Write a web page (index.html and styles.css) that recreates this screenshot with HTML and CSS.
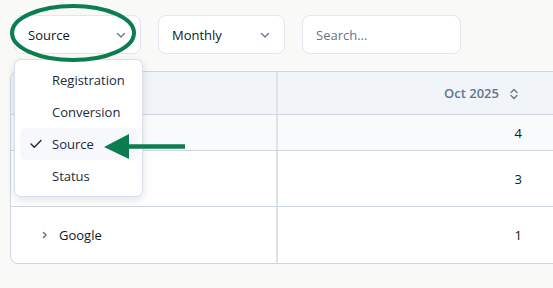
FILE: index.html
```html
<!DOCTYPE html>
<html lang="en">
<head>
    <meta charset="UTF-8">
    <meta name="viewport" content="width=device-width, initial-scale=1.0">
    <title>Leads report</title>
    <link rel="stylesheet" href="styles.css">
</head>
<body>
    <div class="toolbar">
        <div class="select-wrap">
            <button class="select select-group">
                <span>Source</span>
                <svg class="chev" width="12" height="12" viewBox="0 0 12 12"><path d="M2.5 4.5 6 8l3.5-3.5" fill="none" stroke="#64748b" stroke-width="1.3" stroke-linecap="round" stroke-linejoin="round"/></svg>
            </button>
            <ul class="menu">
                <li class="menu-item">Registration</li>
                <li class="menu-item">Conversion</li>
                <li class="menu-item active">
                    <svg class="check" width="12" height="10" viewBox="0 0 12 10"><path d="M1 5l3.3 3.3L11 1.5" fill="none" stroke="#1e293b" stroke-width="1.4" stroke-linecap="round" stroke-linejoin="round"/></svg>
                    Source
                </li>
                <li class="menu-item">Status</li>
            </ul>
        </div>
        <button class="select select-period">
            <span>Monthly</span>
            <svg class="chev" width="12" height="12" viewBox="0 0 12 12"><path d="M2.5 4.5 6 8l3.5-3.5" fill="none" stroke="#64748b" stroke-width="1.3" stroke-linecap="round" stroke-linejoin="round"/></svg>
        </button>
        <input class="search" type="text" placeholder="Search...">
    </div>

    <div class="table">
        <div class="row head">
            <div class="cell first"></div>
            <div class="cell num">
                Oct 2025
                <svg class="sort" width="12" height="14" viewBox="0 0 12 14"><path d="M3 5.5 6 2.5l3 3M3 8.5l3 3 3-3" fill="none" stroke="#64748b" stroke-width="1.3" stroke-linecap="round" stroke-linejoin="round"/></svg>
            </div>
        </div>
        <div class="row short alt">
            <div class="cell first"></div>
            <div class="cell num">4</div>
        </div>
        <div class="row tall">
            <div class="cell first"></div>
            <div class="cell num">3</div>
        </div>
        <div class="row tall last">
            <div class="cell first">
                <svg class="expand" width="8" height="10" viewBox="0 0 8 10"><path d="M2.5 2.5 5 5 2.5 7.5" fill="none" stroke="#64748b" stroke-width="1.6" stroke-linecap="round" stroke-linejoin="round"/></svg>
                Google
            </div>
            <div class="cell num">1</div>
        </div>
    </div>

    <!-- annotation marks drawn over the screenshot -->
    <svg class="marks" width="553" height="288" viewBox="0 0 553 288">
        <ellipse cx="73" cy="33" rx="61" ry="27" fill="none" stroke="#0b7d4f" stroke-width="4"/>
        <path d="M128 146.5H185" stroke="#0b7d4f" stroke-width="4.5"/>
        <path d="M104 147L129 134V159Z" fill="#0b7d4f"/>
    </svg>
</body>
</html>
```

FILE: styles.css
```css
/* Report toolbar + pivot table */
body {
    margin: 0;
    background-color: #f9f9f7;
    font-family: "Open Sans", "Noto Sans", sans-serif;
    font-size: 13px;
    color: #0f172a;
    overflow: hidden;
    position: relative;
    height: 288px;
}

.toolbar {
    display: flex;
    gap: 17px;
    padding: 15px 0 0 14px;
    height: 39px;
}
.select-wrap {
    position: relative;
}
.select {
    display: flex;
    align-items: center;
    justify-content: space-between;
    height: 39px;
    padding: 0 13px 0 13px;
    background-color: #fff;
    border: 1px solid #e2e6ee;
    border-radius: 8px;
    font: inherit;
    color: #0f172a;
    box-sizing: border-box;
}
.select-group { width: 127px; }
.select-period { width: 127px; }
.chev { margin-top: 1px; }

.search {
    width: 159px;
    height: 39px;
    box-sizing: border-box;
    padding: 0 13px;
    border: 1px solid #e2e6ee;
    border-radius: 8px;
    background-color: #fff;
    font: inherit;
    outline: none;
}
.search::placeholder { color: #64748b; }

.menu {
    position: absolute;
    top: 44px;
    left: 0;
    z-index: 5;
    width: 129px;
    margin: 0;
    padding: 4px 4px 4px 5px;
    list-style: none;
    box-sizing: border-box;
    background-color: #fff;
    border: 1px solid #d9dfe8;
    border-radius: 7px;
    box-shadow: 0 3px 8px rgba(15, 23, 42, 0.12);
}
.menu-item {
    position: relative;
    height: 32px;
    line-height: 32px;
    padding-left: 32px;
    border-radius: 6px;
    color: #1e293b;
}
.menu-item.active { background-color: #f6f8fb; }
.check {
    position: absolute;
    left: 10px;
    top: 11px;
}

.table {
    margin: 17px 0 0 10px;
    width: 570px;
    background-color: #fff;
    border: 1px solid #cdd6e1;
    border-radius: 8px;
    overflow: hidden;
}
.row {
    display: flex;
    border-bottom: 1px solid #cdd6e1;
}
.row.last { border-bottom: none; }
.row.head { height: 42px; background-color: #f1f4f9; }
.row.short { height: 35px; }
.row.tall { height: 55px; }
.row.last { height: 56px; }
.row.alt { background-color: #f8fafc; }

.cell {
    display: flex;
    align-items: center;
}
.cell.first {
    width: 267px;
    border-right: 2px solid #dfe3e8;
    padding-left: 30px;
    box-sizing: border-box;
    gap: 10px;
}
.cell.num {
    flex: 1;
    justify-content: flex-end;
    padding-right: 59px;
}
.head .cell.num {
    color: #64748b;
    font-weight: 600;
    gap: 9px;
    padding-right: 61px;
}
.sort { margin-top: 1px; }

.marks {
    position: absolute;
    top: 0;
    left: 0;
    z-index: 10;
    pointer-events: none;
}
```
